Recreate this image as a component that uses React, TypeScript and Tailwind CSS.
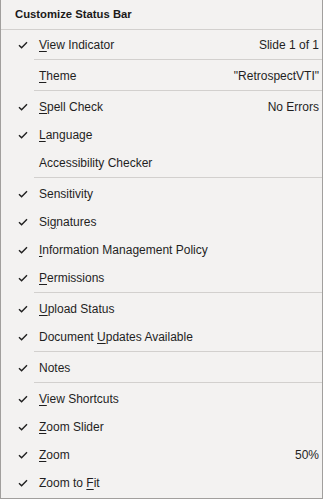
import React from "react";

type Item = {
  pre?: string;
  key?: string;
  post?: string;
  checked: boolean;
  value?: string;
  sepAfter?: boolean;
};

const items: Item[] = [
  { key: "V", post: "iew Indicator", checked: true, value: "Slide 1 of 1", sepAfter: true },
  { key: "T", post: "heme", checked: false, value: "\"RetrospectVTI\"", sepAfter: true },
  { key: "S", post: "pell Check", checked: true, value: "No Errors" },
  { key: "L", post: "anguage", checked: true },
  { pre: "Accessibility Checker", checked: false, sepAfter: true },
  { pre: "Sensitivity", checked: true },
  { pre: "Si", key: "g", post: "natures", checked: true },
  { key: "I", post: "nformation Management Policy", checked: true },
  { key: "P", post: "ermissions", checked: true, sepAfter: true },
  { key: "U", post: "pload Status", checked: true },
  { pre: "Document ", key: "U", post: "pdates Available", checked: true, sepAfter: true },
  { pre: "Notes", checked: true, sepAfter: true },
  { key: "V", post: "iew Shortcuts", checked: true },
  { key: "Z", post: "oom Slider", checked: true },
  { key: "Z", post: "oom", checked: true, value: "50%" },
  { pre: "Zoom to ", key: "F", post: "it", checked: true },
];

function Check() {
  return (
    <svg width="10" height="8" viewBox="0 0 10 8" className="block">
      <path d="M1 4.2 L3.6 6.8 L9 1.2" fill="none" stroke="#1f1f1f" strokeWidth="1.4" />
    </svg>
  );
}

export default function App() {
  return (
    <div
      className="w-[323px] h-[499px] bg-[#f3f2f1] border-l border-r border-b border-[#a19f9d] text-[12px] text-[#1f1f1f] overflow-hidden flex flex-col"
      style={{ fontFamily: '"Liberation Sans", Arial, sans-serif' }}
    >
      <div className="h-[29px] flex items-center pl-[14px] font-bold text-[11.3px] text-[#1b1a19]">
        Customize Status Bar
      </div>
      <div className="h-px bg-[#d2d0ce]" />
      {items.map((it, i) => (
        <React.Fragment key={i}>
          <div className="h-[28px] flex items-center pt-px">
            <div className="w-[38px] pl-[17px] flex items-center">{it.checked ? <Check /> : null}</div>
            <div className="flex-1 whitespace-nowrap">
              {it.pre}
              {it.key ? <u className="underline-offset-[2px]">{it.key}</u> : null}
              {it.post}
            </div>
            {it.value ? <div className="pr-[3px] whitespace-nowrap">{it.value}</div> : null}
          </div>
          {it.sepAfter ? (
            <div className="h-[3px] flex items-center pl-[33px]">
              <div className="h-px w-full bg-[#d2d0ce]" />
            </div>
          ) : null}
        </React.Fragment>
      ))}
    </div>
  );
}
